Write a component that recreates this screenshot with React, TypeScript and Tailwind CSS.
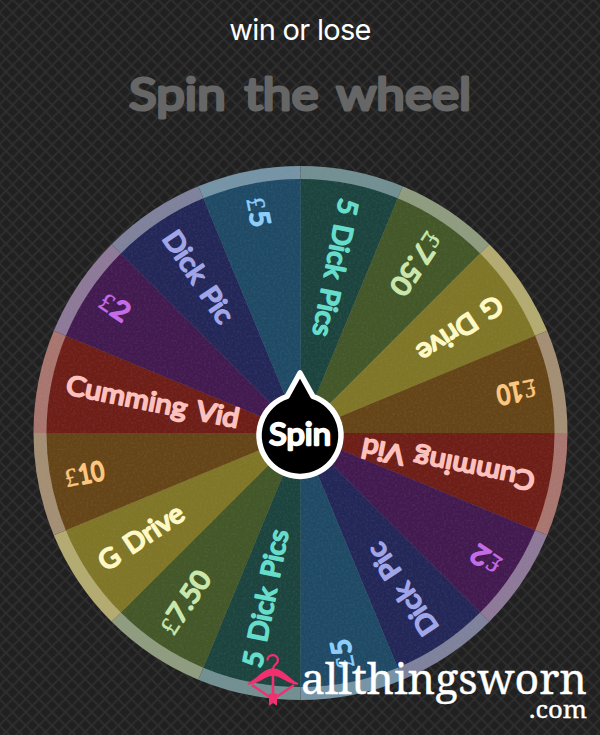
const CX = 300.5;
const CY = 433;
const RIM_RADIUS = 267;
const DISC_RADIUS = 254;
const STEP = 22.5;
const LABEL_START = 240;

interface Prize {
  label: string;
  fill: string;
  rim: string;
  text: string;
  width: number;
}

const prizes: Prize[] = [
  { label: "5 Dick Pics", fill: "#1c443f", rim: "#728f92", text: "#66dccb", width: 140 },
  { label: "£7.50", fill: "#435728", rim: "#8f9c7f", text: "#c9e6ac", width: 69 },
  { label: "G Drive", fill: "#807627", rim: "#b3ab70", text: "#fdf8c4", width: 97 },
  { label: "£10", fill: "#654517", rim: "#a48f74", text: "#fac680", width: 39 },
  { label: "Cumming Vid", fill: "#6e1e17", rim: "#a9766f", text: "#fcc0bd", width: 176 },
  { label: "£2", fill: "#421a50", rim: "#8e7999", text: "#c46be6", width: 30 },
  { label: "Dick Pic", fill: "#232758", rim: "#7f829c", text: "#a0a5e8", width: 105 },
  { label: "£5", fill: "#1f4a66", rim: "#7594a5", text: "#8ccdfa", width: 29 },
];

const slices = [...prizes, ...prizes];

function point(radius: number, deg: number) {
  const rad = ((deg - 90) * Math.PI) / 180;
  return `${(CX + radius * Math.cos(rad)).toFixed(2)} ${(CY + radius * Math.sin(rad)).toFixed(2)}`;
}

function wedge(radius: number, index: number) {
  const from = index * STEP;
  return `M${CX} ${CY}L${point(radius, from)}A${radius} ${radius} 0 0 1 ${point(radius, from + STEP)}Z`;
}

function SliceLabel({ prize, index }: { prize: Prize; index: number }) {
  const angle = (index + 0.5) * STEP + 90;
  const hasPound = prize.label.startsWith("£");
  const rest = hasPound ? prize.label.slice(1) : prize.label;
  const poundWidth = hasPound ? 13 : 0;
  return (
    <g transform={`translate(${CX} ${CY}) rotate(${angle})`} fill={prize.text} stroke={prize.text}>
      {hasPound && (
        <text x={-LABEL_START} y={7.5} fontSize={26} strokeWidth={0.4} className="font-['Liberation_Serif',serif]">
          £
        </text>
      )}
      <text
        x={-LABEL_START + poundWidth + 1}
        y={7.5}
        fontSize={27}
        textLength={prize.width - poundWidth}
        lengthAdjust="spacingAndGlyphs"
        strokeWidth={1.9}
        strokeLinejoin="round"
        wordSpacing={3}
        className="font-['Lato',sans-serif] font-normal"
      >
        {rest}
      </text>
    </g>
  );
}

function Wheel() {
  return (
    <svg viewBox="0 0 600 735" className="absolute inset-0 h-full w-full">
      <defs>
        <filter id="grain" x="0" y="0" width="100%" height="100%">
          <feTurbulence type="fractalNoise" baseFrequency="0.45" numOctaves="2" seed="4" />
          <feColorMatrix values="0 0 0 0 0.5  0 0 0 0 0.5  0 0 0 0 0.5  1.6 0 0 0 -0.65" />
        </filter>
        <clipPath id="disc">
          <circle cx={CX} cy={CY} r={RIM_RADIUS} />
        </clipPath>
      </defs>
      {slices.map((s, i) => (
        <path key={`rim-${i}`} d={wedge(RIM_RADIUS, i)} fill={s.rim} />
      ))}
      {slices.map((s, i) => (
        <path key={`disc-${i}`} d={wedge(DISC_RADIUS, i)} fill={s.fill} />
      ))}
      <g clipPath="url(#disc)">
        <rect x="33" y="166" width="535" height="535" filter="url(#grain)" opacity="0.13" />
      </g>
      {slices.map((s, i) => (
        <SliceLabel key={`label-${i}`} prize={s} index={i} />
      ))}
      {/* Pointer and hub */}
      <path
        d="M300 373L287 396.5A41 41 0 1 0 313 396.5Z"
        fill="#000"
        stroke="#fff"
        strokeWidth="5.5"
        strokeLinejoin="round"
      />
      <text
        x="269"
        y="445"
        fontSize="31"
        fill="#fff"
        stroke="#fff"
        strokeWidth="2.3"
        strokeLinejoin="round"
        textLength="62"
        lengthAdjust="spacingAndGlyphs"
        className="font-['Lato',sans-serif] font-normal"
      >
        Spin
      </text>
    </svg>
  );
}

function Backdrop() {
  return (
    <svg className="absolute inset-0 h-full w-full">
      <defs>
        <pattern id="mesh" x="6" y="6" width="13.2" height="13.2" patternUnits="userSpaceOnUse">
          <path d="M-2 -2L15.200 15.200M15.200 -2L-2 15.200" stroke="#2f2f2f" strokeWidth="1.8" />
        </pattern>
      </defs>
      <rect width="100%" height="100%" fill="#202020" />
      <rect width="100%" height="100%" fill="url(#mesh)" />
    </svg>
  );
}

function HangerLogo() {
  return (
    <svg viewBox="0 0 54 54" className="h-[54px] w-[54px] shrink-0" fill="none" stroke="#f0306f">
      <path d="M21.500 8.500C21 1.500 32 1.500 32 8C32 13 27 12 27 17" strokeWidth="2.200" />
      <path
        d="M2 32C11 28 17 17 27 17S43 28 52 32C42 32 36 23 27 23S12 32 2 32Z"
        fill="#f0306f"
        strokeWidth="1.400"
      />
      <path d="M6 33L25 46M48 33L29 46" strokeWidth="2.400" />
      <path d="M27 17V46" strokeWidth="2.600" />
      <path d="M23.500 42H30.500V53L27 50.500L23.500 53Z" fill="#f0306f" strokeWidth="1" />
    </svg>
  );
}

function Watermark() {
  return (
    <div className="absolute top-[652px] left-[246px] flex w-[342px] items-start">
      <HangerLogo />
      <svg
        viewBox="0 0 288 75"
        className="h-[75px] w-[288px] overflow-visible font-['Noto_Serif','DejaVu_Serif',serif]"
        fill="#fff"
        stroke="#fff"
        strokeWidth="0.4"
      >
        <text x="1" y="42" fontSize="42" textLength="286" lengthAdjust="spacingAndGlyphs">
          allthingsworn
        </text>
        <text x="229" y="66" fontSize="24" textLength="58" lengthAdjust="spacingAndGlyphs">
          .com
        </text>
      </svg>
    </div>
  );
}

export default function App() {
  return (
    <main className="relative h-[735px] w-[600px] overflow-hidden bg-[#202020]">
      <Backdrop />
      <Wheel />
      <header className="relative flex flex-col items-center pt-3">
        <p className="font-['Inter',sans-serif] text-[29px] leading-9 tracking-[-0.7px] text-white">win or lose</p>
        <svg viewBox="0 0 344 60" className="mt-4 h-[60px] w-[344px] overflow-visible">
          <text
            x="1"
            y="46"
            fontSize="45"
            fill="#666"
            stroke="#666"
            strokeWidth="3"
            strokeLinejoin="round"
            wordSpacing="5"
            textLength="342"
            lengthAdjust="spacingAndGlyphs"
            className="font-['Lato',sans-serif] font-normal"
          >
            Spin the wheel
          </text>
        </svg>
      </header>
      <Watermark />
    </main>
  );
}
